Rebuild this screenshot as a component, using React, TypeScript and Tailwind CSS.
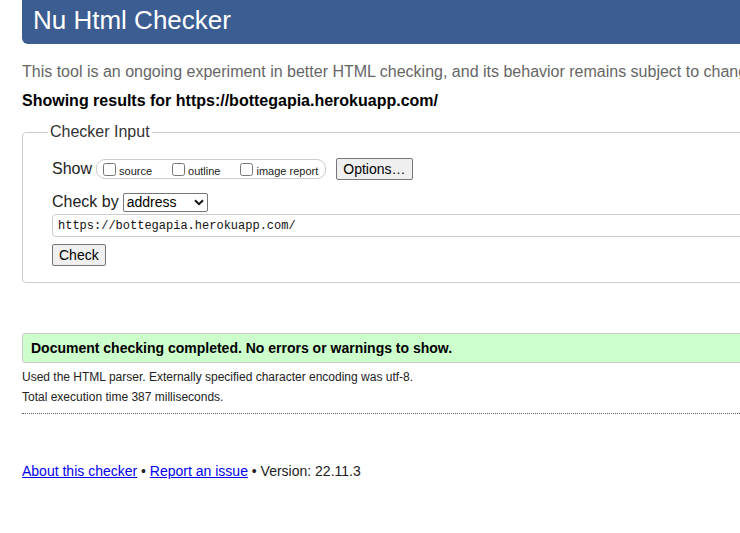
import React from 'react';

const sans = "font-['Liberation_Sans',Arial,sans-serif]";

const ShowOption: React.FC<{ label: string; last?: boolean }> = ({ label, last }) => (
  <label className={`flex items-center ${last ? '' : 'mr-[20px]'}`}>
    <input type="checkbox" className="m-0 w-[13px] h-[13px]" />
    <span className="ml-[3px] text-[11px] leading-[14px] mt-[3px]">{label}</span>
  </label>
);

const App: React.FC = () => {
  return (
    <div className={`w-[740px] h-[533px] overflow-hidden bg-white text-[#222] ${sans}`}>
      <div className="w-[900px] pl-[22px]">
        {/* header */}
        <div className="h-[44px] bg-[#3b5d92] rounded-b-[6px] pl-[11px] flex items-center">
          <h1 className="text-[26px] leading-[30px] text-white mt-[-4px]">Nu Html Checker</h1>
        </div>

        <p className="mt-[18px] text-[16px] leading-[20px] text-[#666] whitespace-nowrap">
          This tool is an ongoing experiment in better HTML checking, and its behavior remains subject to change
        </p>
        <p className="mt-[9px] text-[16px] leading-[20px] font-bold text-black">
          Showing results for https://bottegapia.herokuapp.com/
        </p>

        {/* checker input */}
        <fieldset className="mt-[11px] border border-[#ccc] rounded-[4px] pl-[29px] pb-[15px]">
          <legend className="-ml-[4px] px-[2px] text-[16px] leading-[20px] text-[#333]">Checker Input</legend>

          <div className="mt-[16px] flex items-center h-[22px]">
            <span className="text-[16px] leading-[20px] text-[#222]">Show</span>
            <div className="ml-[4px] h-[20px] flex items-center border border-[#ccc] rounded-[9px] pl-[6px] pr-[7px]">
              <ShowOption label="source" />
              <ShowOption label="outline" />
              <ShowOption label="image report" last />
            </div>
            <button className="ml-[10px] h-[22px] px-[6px] bg-[#efefef] border border-[#767676] rounded-[2px] text-[14px] leading-[16px] text-black">
              Options…
            </button>
          </div>

          <div className="mt-[11px] flex items-center h-[22px]">
            <span className="text-[16px] leading-[20px] text-[#222]">Check by</span>
            <div className="ml-[4px] w-[85px] h-[19px] flex items-center justify-between border border-[#767676] rounded-[2px] pl-[3px] pr-[3px] text-[14px] leading-[16px] text-black">
              <span>address</span>
              <svg width="10" height="7" viewBox="0 0 10 7" fill="none">
                <path d="M1 1.2l4 4 4-4" stroke="#111" strokeWidth="2" />
              </svg>
            </div>
          </div>

          <div className="mt-[1px] h-[23px] w-[860px] border border-[#ccc] rounded-[4px] flex items-center pl-[5px] font-['Liberation_Mono',monospace] text-[12px] text-[#111]">
            https://bottegapia.herokuapp.com/
          </div>

          <button className="mt-[7px] h-[22px] px-[6px] bg-[#efefef] border border-[#767676] rounded-[2px] text-[14px] leading-[16px] text-black">
            Check
          </button>
        </fieldset>

        {/* result */}
        <div className="mt-[50px] h-[30px] bg-[#ccffcc] border border-[#ccc] rounded-l-[3px] pl-[8px] flex items-center">
          <p className="text-[14px] font-bold text-black">Document checking completed. No errors or warnings to show.</p>
        </div>
        <p className="mt-[4px] text-[12px] leading-[20px] text-[#222]">
          Used the HTML parser. Externally specified character encoding was utf-8.
        </p>
        <p className="text-[12px] leading-[20px] text-[#222]">Total execution time 387 milliseconds.</p>
        <div className="mt-[6px] border-t border-dotted border-[#666]" />

        {/* footer */}
        <p className="mt-[47px] text-[14px] leading-[20px] text-[#222]">
          <a href="#" className="text-[#00e] underline">About this checker</a>
          {' • '}
          <a href="#" className="text-[#00e] underline">Report an issue</a>
          {' • Version: 22.11.3'}
        </p>
      </div>
    </div>
  );
};

export default App;
